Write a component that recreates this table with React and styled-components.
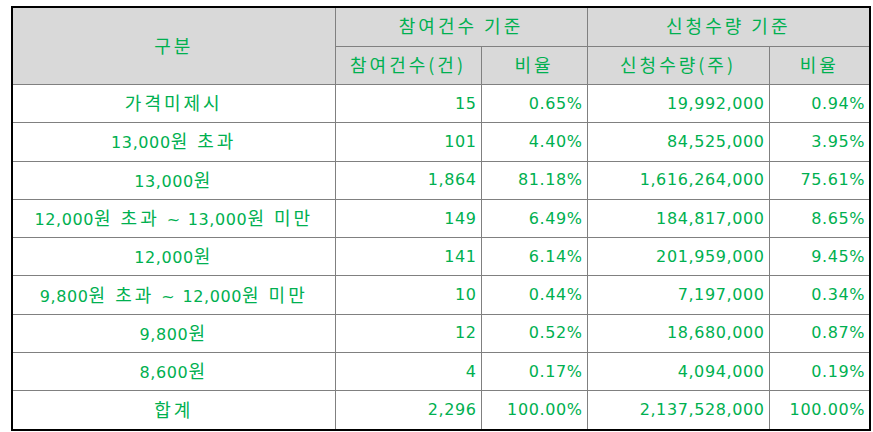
import React from "react";
import styled, { createGlobalStyle } from "styled-components";

const Global = createGlobalStyle`
  html, body { margin: 0; padding: 0; background: #ffffff; }
  body {
    font-family: "DejaVu Sans", "Noto Sans CJK KR", sans-serif;
    font-size: 16px;
    color: #00b050;
  }
`;

const Page = styled.div`
  padding: 6px 0 0 11px;
  width: 873px;
  height: 432px;
  box-sizing: border-box;
`;

const Table = styled.table`
  border-collapse: collapse;
  table-layout: fixed;
  width: 858px;
  border: 2px solid #000000;
  letter-spacing: 0.6px;
`;

const HeadCell = styled.th`
  background: #d9d9d9;
  border: 1px solid #808080;
  font-weight: normal;
  text-align: center;
  height: 37.5px;
  line-height: 20px;
  padding: 0;
  color: #00b050;
`;

const Cell = styled.td`
  border: 1px solid #808080;
  height: 37.3px;
  line-height: 20px;
  padding: 0 ${(p) => (p.$align === "right" ? "4px" : "0")} 0 0;
  text-align: ${(p) => p.$align || "center"};
  white-space: nowrap;
`;

const Ko = styled.span`
  font-family: "Noto Sans CJK KR", sans-serif;
  font-size: 18px;
  letter-spacing: 3px;
`;

const Txt = ({ children }) =>
  children
    .split(/([가-힣 ()]+)/)
    .filter((p) => p !== "")
    .map((p, i) => (/[가-힣 ()]/.test(p) ? <Ko key={i}>{p}</Ko> : <React.Fragment key={i}>{p}</React.Fragment>));

const rows = [
  ["가격미제시", "15", "0.65%", "19,992,000", "0.94%"],
  ["13,000원 초과", "101", "4.40%", "84,525,000", "3.95%"],
  ["13,000원", "1,864", "81.18%", "1,616,264,000", "75.61%"],
  ["12,000원 초과 ~ 13,000원 미만", "149", "6.49%", "184,817,000", "8.65%"],
  ["12,000원", "141", "6.14%", "201,959,000", "9.45%"],
  ["9,800원 초과 ~ 12,000원 미만", "10", "0.44%", "7,197,000", "0.34%"],
  ["9,800원", "12", "0.52%", "18,680,000", "0.87%"],
  ["8,600원", "4", "0.17%", "4,094,000", "0.19%"],
  ["합계", "2,296", "100.00%", "2,137,528,000", "100.00%"],
];

export default function App() {
  return (
    <Page>
      <Global />
      <Table>
        <colgroup>
          <col style={{ width: 323 }} />
          <col style={{ width: 146 }} />
          <col style={{ width: 106 }} />
          <col style={{ width: 182 }} />
          <col style={{ width: 101 }} />
        </colgroup>
        <thead>
          <tr>
            <HeadCell rowSpan={2}><Txt>구분</Txt></HeadCell>
            <HeadCell colSpan={2}><Txt>참여건수 기준</Txt></HeadCell>
            <HeadCell colSpan={2}><Txt>신청수량 기준</Txt></HeadCell>
          </tr>
          <tr>
            <HeadCell><Txt>참여건수(건)</Txt></HeadCell>
            <HeadCell><Txt>비율</Txt></HeadCell>
            <HeadCell><Txt>신청수량(주)</Txt></HeadCell>
            <HeadCell><Txt>비율</Txt></HeadCell>
          </tr>
        </thead>
        <tbody>
          {rows.map((r, i) => (
            <tr key={i}>
              <Cell><Txt>{r[0]}</Txt></Cell>
              <Cell $align="right">{r[1]}</Cell>
              <Cell $align="right">{r[2]}</Cell>
              <Cell $align="right">{r[3]}</Cell>
              <Cell $align="right">{r[4]}</Cell>
            </tr>
          ))}
        </tbody>
      </Table>
    </Page>
  );
}
